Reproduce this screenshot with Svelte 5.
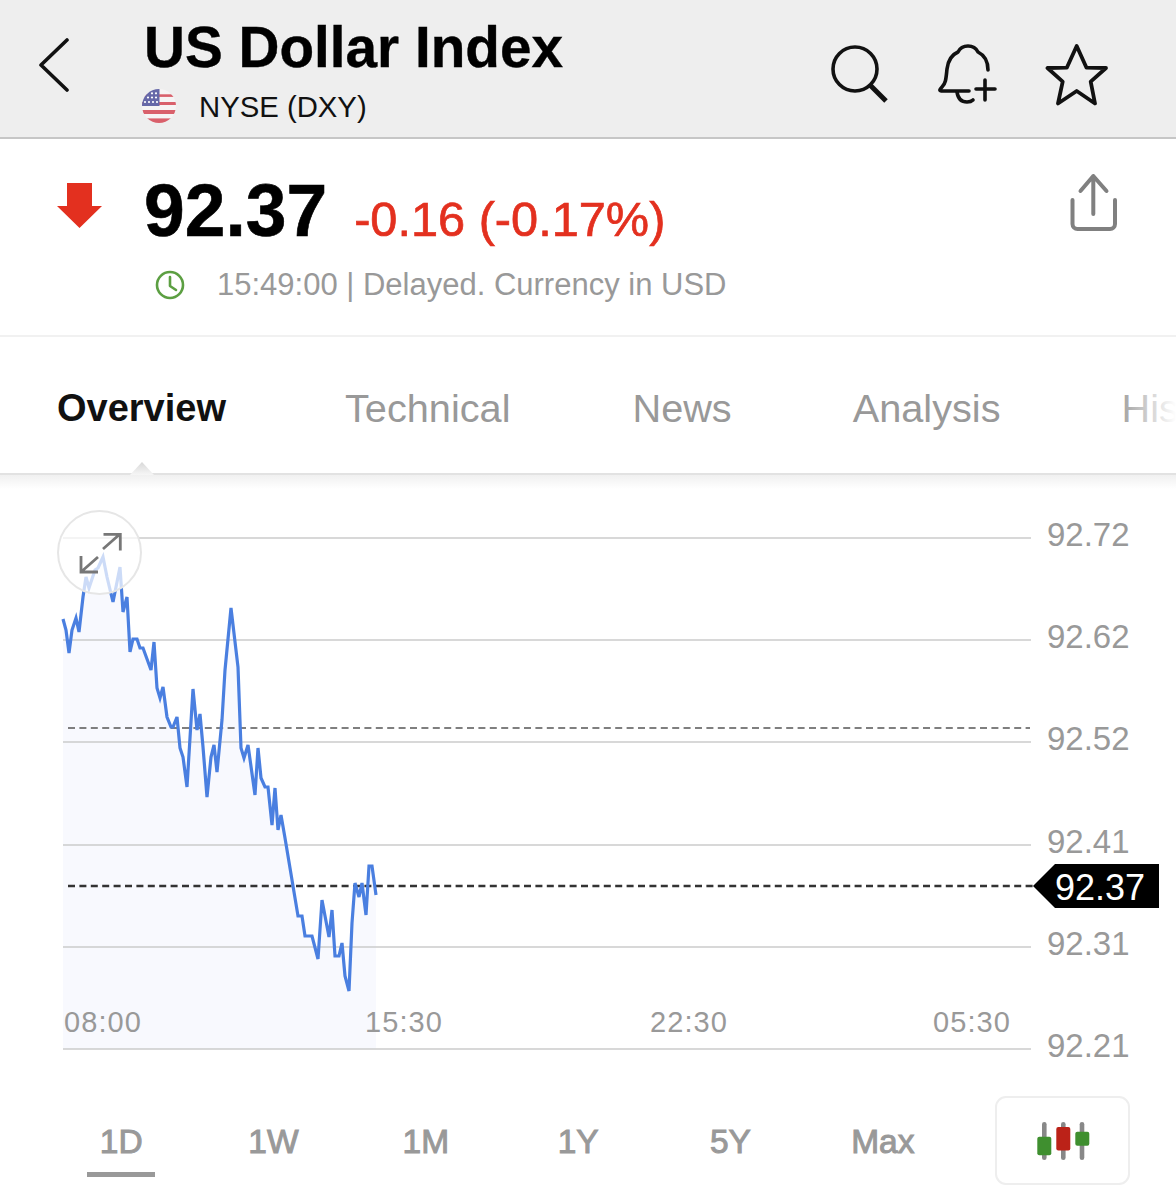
<script lang="ts">
  // Quote screen for one instrument. Chart coordinates below are page pixels, the svg viewBox is offset to match.
  const tabs = ["Overview", "Technical", "News", "Analysis", "History"];
  const ranges = ["1D", "1W", "1M", "1Y", "5Y", "Max"];
  const gridY = [538, 640, 742, 845, 947, 1049];
  const priceLabels = ["92.72", "92.62", "92.52", "92.41", "92.31", "92.21"];
  const timeLabels = [
    { x: 64, text: "08:00" },
    { x: 365, text: "15:30" },
    { x: 650, text: "22:30" },
    { x: 933, text: "05:30" },
  ];

  const trace = [
    [63, 619], [66, 630], [69, 653], [72, 630], [76, 618], [79, 632], [83, 597], [86, 577],
    [89, 588], [95, 570], [98, 568], [103, 557], [107, 577], [113, 602], [120, 567], [123, 612],
    [127, 597], [130, 652], [133, 639], [137, 639], [140, 648], [143, 648], [151, 670], [154, 642],
    [157, 688], [160, 698], [163, 687], [167, 717], [171, 727], [173, 727], [177, 717], [180, 748],
    [183, 757], [187, 787], [193, 689], [197, 730], [200, 714], [203, 747], [207, 797], [211, 757],
    [214, 745], [217, 772], [222, 720], [225, 670], [231, 608], [238, 667], [241, 748], [244, 758],
    [248, 745], [255, 795], [258, 748], [261, 778], [265, 787], [268, 787], [272, 825], [275, 788],
    [278, 830], [281, 815], [285, 838], [298, 916], [302, 916], [305, 936], [312, 936], [318, 959],
    [322, 900], [329, 937], [332, 910], [335, 956], [339, 956], [342, 943], [345, 976], [349, 991],
    [352, 923], [355, 883], [359, 897], [362, 883], [366, 915], [369, 866], [372, 866], [376, 895],
  ];
  const linePoints = trace.map((p) => p.join(",")).join(" ");
  const areaPoints = `63,1049 ${linePoints} 376,1049`;
</script>

<div class="screen">
  <header class="topbar">
    <svg class="back" width="32" height="54" viewBox="0 0 32 54" fill="none">
      <path d="M28 2 2 27l26 25" stroke="#111" stroke-width="3.6" stroke-linecap="round" stroke-linejoin="round" />
    </svg>
    <div class="heading">
      <h1>US Dollar Index</h1>
      <div class="exchange">
        <svg width="34" height="34" viewBox="0 0 34 34">
          <defs>
            <clipPath id="flag"><circle cx="17" cy="17" r="17" /></clipPath>
          </defs>
          <g clip-path="url(#flag)">
            <rect width="34" height="34" fill="#f6f4f4" />
            <rect y="5.3" width="34" height="2.6" fill="#d9606b" />
            <rect y="13" width="34" height="3" fill="#d9606b" />
            <rect y="21" width="34" height="4" fill="#d9606b" />
            <rect y="29.4" width="34" height="5" fill="#d9606b" />
            <rect width="17.5" height="17" fill="#6668a8" />
            <g fill="#fff">
              <circle cx="10" cy="4.3" r="1.1" /><circle cx="14" cy="4.3" r="1.1" />
              <circle cx="6" cy="8.5" r="1.1" /><circle cx="10" cy="8.5" r="1.1" /><circle cx="14" cy="8.5" r="1.1" />
              <circle cx="3" cy="13" r="1.1" /><circle cx="7" cy="13" r="1.1" /><circle cx="11" cy="13" r="1.1" /><circle cx="15" cy="13" r="1.1" />
            </g>
          </g>
        </svg>
        <span>NYSE (DXY)</span>
      </div>
    </div>
    <div class="actions">
      <svg width="60" height="62" viewBox="830 44 60 62" fill="none" stroke="#111">
        <circle cx="856" cy="69" r="22" stroke-width="3.6" />
        <path d="M871 85 887 101" stroke-width="5" />
      </svg>
      <svg width="62" height="62" viewBox="937 44 62 62" fill="none" stroke="#111" stroke-width="3.6" stroke-linecap="round" stroke-linejoin="round">
        <path d="M989 70c0-9-4-15-10-18-2-4-6-6-10-6s-8 2-10 6c-7 3-10 9-11 17-1 9-1 14-5 18-3 3-3 4 1 4h26" />
        <path d="M958 92c1 7 5 10 10 10 2 0 4 0 6-2" />
        <path d="M977 89h19M986 80v20" />
      </svg>
      <svg width="64" height="64" viewBox="1045 43 64 64" fill="none" stroke="#111" stroke-width="3.8" stroke-linejoin="round">
        <path d="M1076.7 46 1086.5 67.7 1106 68 1090.7 81.7 1095 103.5 1076.7 91 1058 103.5 1062.7 81.7 1047.5 68 1066.8 67.7Z" />
      </svg>
    </div>
  </header>

  <section class="quote">
    <div class="price-row">
      <svg class="arrow" width="46" height="46" viewBox="57 183 46 46">
        <path d="M67 183H92V206H102L79.5 228 57 206H67Z" fill="#e3301f" />
      </svg>
      <span class="price">92.37</span>
      <span class="change">-0.16 (-0.17%)</span>
      <svg class="share" width="48" height="60" viewBox="1070 173 48 60" fill="none" stroke="#808080" stroke-width="4" stroke-linecap="round" stroke-linejoin="round">
        <path d="M1072.5 200V224a5 5 0 0 0 5 5H1110a5 5 0 0 0 5-5V200" />
        <path d="M1093.3 214V176M1080.5 191 1093.3 176 1106.5 191" />
      </svg>
    </div>
    <div class="status">
      <svg width="30" height="30" viewBox="155 267 30 30" fill="none" stroke="#5c9f42" stroke-width="2.6" stroke-linecap="round" stroke-linejoin="round">
        <circle cx="170" cy="282" r="13" />
        <path d="M170 274v9l6 4" />
      </svg>
      <span>15:49:00 | Delayed. Currency in USD</span>
    </div>
  </section>

  <nav class="tabs">
    {#each tabs as tab, i}
      <span class="tab" class:active={i === 0}>{tab}</span>
    {/each}
    <span class="caret"></span>
    <span class="fade"></span>
  </nav>

  <div class="chart">
    <svg width="1176" height="620" viewBox="0 475 1176 620">
      <polygon points={areaPoints} fill="#f8f9fe" />
      {#each gridY as y, i}
        <line x1="63" x2="1031" y1={y} y2={y} stroke="#cbcbcb" stroke-width="1.6" />
        <text class="axis" x="1047" y={y + 8}>{priceLabels[i]}</text>
      {/each}
      <line x1="68" x2="1030" y1="728" y2="728" stroke="#555" stroke-width="1.4" stroke-dasharray="7 4.4" />
      <line x1="68" x2="1034" y1="886" y2="886" stroke="#333" stroke-width="2.4" stroke-dasharray="7 4.4" />
      <polyline points={linePoints} fill="none" stroke="#4a7fe0" stroke-width="3.2" stroke-linejoin="miter" />
      {#each timeLabels as t}
        <text class="time" x={t.x} y="1032">{t.text}</text>
      {/each}
      <polygon points="1033,886 1055,864 1159,864 1159,908 1055,908" fill="#000" />
      <text class="last" x="1055" y="900">92.37</text>
    </svg>
    <button class="expand" aria-label="Expand chart">
      <svg width="44" height="44" viewBox="77 530 44 44" fill="none" stroke="#777" stroke-width="2.8">
        <path d="M102 548 119 533M102.5 533.3H119.3V549.5" />
        <path d="M97 556 80 571M80 555V571H97" />
      </svg>
    </button>
  </div>

  <div class="ranges">
    <div class="range-list">
      {#each ranges as range, i}
        <span class="range" class:active={i === 0}>{range}</span>
      {/each}
    </div>
    <button class="candles" aria-label="Candlestick chart">
      <svg width="56" height="40" viewBox="1034 1120 56 40">
        <g fill="#888">
          <rect x="1041" y="1121" width="4.6" height="38" rx="2.3" />
          <rect x="1060" y="1121" width="4.6" height="38" rx="2.3" />
          <rect x="1078.7" y="1121" width="4.6" height="38" rx="2.3" />
        </g>
        <rect x="1036.3" y="1135.7" width="14" height="18.6" rx="2" fill="#3f8f2f" />
        <rect x="1055.3" y="1126" width="14" height="23.4" rx="2" fill="#bb2218" />
        <rect x="1074.3" y="1130.7" width="14" height="14" rx="2" fill="#3f8f2f" />
      </svg>
    </button>
  </div>
</div>

<style>
  :global(body) {
    margin: 0;
    background: #fff;
  }
  .screen {
    width: 1176px;
    height: 1200px;
    overflow: hidden;
    font-family: "Liberation Sans", Arial, sans-serif;
    background: #fff;
  }
  svg {
    display: block;
  }

  .topbar {
    box-sizing: border-box;
    height: 139px;
    display: flex;
    align-items: flex-start;
    background: #eeeeee;
    border-bottom: 2px solid #c6c6c6;
  }
  .back {
    margin: 38px 0 0 39px;
    flex: none;
  }
  .heading {
    margin-left: 73px;
    flex: 1;
  }
  h1 {
    margin: 17px 0 0;
    font-size: 56.7px;
    line-height: 62px;
    font-weight: 700;
    color: #000;
    -webkit-text-stroke: 0.4px #000;
  }
  .exchange {
    display: flex;
    align-items: center;
    gap: 23px;
    margin: 10px 0 0 -2px;
    font-size: 29.3px;
    line-height: 34px;
    color: #111;
  }
  .exchange span {
    position: relative;
    top: 1px;
  }
  .actions {
    display: flex;
    align-items: flex-start;
    margin: 44px 67px 0 0;
    flex: none;
    gap: 47px;
  }
  .actions svg:nth-child(3) {
    margin-top: -1px;
  }

  .quote {
    box-sizing: border-box;
    height: 198px;
    border-bottom: 2px solid #f1f1f1;
    padding-left: 57px;
  }
  .price-row {
    display: flex;
    align-items: flex-start;
    height: 128px;
  }
  .arrow {
    margin-top: 44px;
    flex: none;
  }
  .price {
    margin: 30px 0 0 41px;
    font-size: 73.2px;
    line-height: 84px;
    font-weight: 700;
    color: #000;
    -webkit-text-stroke: 0.6px #000;
  }
  .change {
    margin: 50px 0 0 27px;
    font-size: 48.7px;
    line-height: 60px;
    color: #e3301f;
    -webkit-text-stroke: 0.7px #e3301f;
  }
  .share {
    margin: 34px 58px 0 auto;
  }
  .status {
    display: flex;
    align-items: center;
    gap: 32px;
    margin: 0 0 0 98px;
    font-size: 31px;
    line-height: 36px;
    color: #999;
  }

  .tabs {
    position: relative;
    box-sizing: border-box;
    height: 138px;
    display: flex;
    align-items: center;
    padding: 7px 0 0 57px;
    font-size: 39.7px;
    color: #999;
    border-bottom: 2px solid #e2e2e2;
    white-space: nowrap;
  }
  .tab {
    flex: none;
    margin-right: 121px;
  }
  .tab:nth-child(1) {
    margin-right: 119px;
  }
  .tab:nth-child(2) {
    margin-right: 122px;
  }
  .tab.active {
    color: #111;
    font-size: 38px;
    font-weight: 700;
  }
  /* Small pointer under the active tab */
  .caret {
    position: absolute;
    left: 130px;
    bottom: -2px;
    width: 24px;
    height: 13px;
    background: linear-gradient(#d8d8d8, #f6f6f6);
    clip-path: polygon(50% 0, 100% 100%, 0 100%);
  }
  .fade {
    position: absolute;
    right: 0;
    top: 0;
    bottom: 0;
    width: 60px;
    background: linear-gradient(to right, rgba(255, 255, 255, 0), #fff);
  }

  .chart {
    position: relative;
    height: 620px;
    background: linear-gradient(#f0f0f0, #fff 14px);
  }
  .axis {
    font-size: 33px;
    fill: #999;
  }
  .time {
    font-size: 29px;
    letter-spacing: 1.1px;
    fill: #999;
  }
  .last {
    font-size: 36px;
    fill: #fff;
  }
  .expand {
    position: absolute;
    left: 57px;
    top: 35px;
    box-sizing: border-box;
    width: 85px;
    height: 85px;
    padding: 0;
    border-radius: 50%;
    border: 2.4px solid #e6e6e6;
    background: rgba(255, 255, 255, 0.72);
    display: flex;
    align-items: center;
    justify-content: center;
  }

  .ranges {
    display: flex;
    align-items: flex-start;
    height: 105px;
    padding-top: 1px;
  }
  .range-list {
    display: flex;
    margin-left: 45px;
    width: 914px;
    flex: none;
  }
  .range {
    box-sizing: border-box;
    width: 152.4px;
    height: 82px;
    padding-top: 28px;
    text-align: center;
    font-size: 33.5px;
    line-height: 36px;
    color: #999;
    -webkit-text-stroke: 1px #999;
    position: relative;
  }
  .range.active::after {
    content: "";
    position: absolute;
    left: 42px;
    top: 76px;
    width: 68px;
    height: 5px;
    background: #999;
  }
  .candles {
    box-sizing: border-box;
    width: 135px;
    height: 89px;
    margin-left: 36px;
    padding: 0;
    background: #fff;
    border: 2.4px solid #eeeeee;
    border-radius: 11px;
    display: flex;
    align-items: center;
    justify-content: center;
  }
</style>
